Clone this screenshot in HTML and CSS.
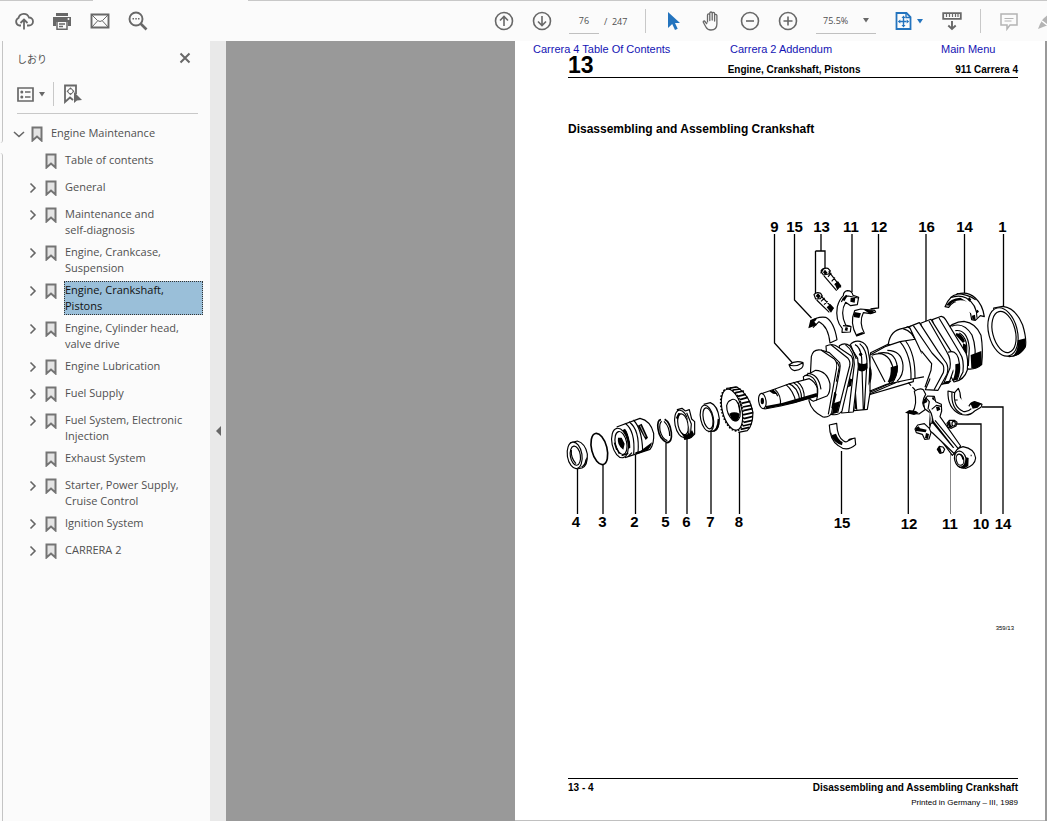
FILE: index.html
```
<!DOCTYPE html>
<html lang="en">
<head>
    <meta charset="UTF-8">
    <meta name="viewport" content="width=device-width, initial-scale=1.0">
    <title>Engine, Crankshaft, Pistons</title>
    <link rel="stylesheet" href="styles.css">
</head>
<body>
    <!-- shared icons -->
    <svg class="defs" width="0" height="0" aria-hidden="true">
        <symbol id="bookmark" viewBox="0 0 12 16"><path d="M1.5 1.5h9v13L6 10.5l-4.500 4z" fill="#e4e4e4" stroke="#747474" stroke-width="2"/></symbol>
        <symbol id="right" viewBox="0 0 12 12"><path d="M3.500 1.500L8 6l-4.500 4.500" fill="none" stroke="#666" stroke-width="1.600"/></symbol>
        <symbol id="down" viewBox="0 0 12 12"><path d="M1 4l5 4.500L11 4" fill="none" stroke="#666" stroke-width="1.600"/></symbol>
        <symbol id="caret" viewBox="0 0 6 5"><path d="M0 0h6L3 4.500z" fill="currentColor"/></symbol>
    </svg>

    <div class="tab-edge"><span></span><i></i><b></b></div>
    <header class="toolbar">
        <div class="tools">
            <button aria-label="Upload"><svg width="20" height="20" viewBox="0 0 20 20"><path d="M7 14.500H5a4 4 0 0 1-.5-7.500 5.500 5.500 0 0 1 10.500-.5 4 4 0 0 1 0 8h-2M10 18.500V9M6.500 12L10 8.500l3.500 3.500" fill="none" stroke="currentColor" stroke-width="1.800"/></svg></button>
            <button aria-label="Print"><svg width="20" height="20" viewBox="0 0 20 20"><path d="M4 2h12v3H4zM1 6h18v9h-3v-4H4v4H1z" fill="currentColor"/><path d="M5 11v7.200h10V11M7 13h6M7 15.500h4" fill="none" stroke="currentColor" stroke-width="1.500"/><circle cx="16.500" cy="8" r="1" fill="#fff"/></svg></button>
            <button aria-label="Mail"><svg width="20" height="20" viewBox="0 0 20 20"><path d="M1.500 3.500h17v13h-17z" fill="none" stroke="currentColor" stroke-width="1.900"/><path d="M2 4l5.500 5.500q2.500 2 5 0L18 4M2 16l5.500-6M18 16l-5.500-6" fill="none" stroke="currentColor"/></svg></button>
            <button aria-label="Search"><svg width="20" height="20" viewBox="0 0 20 20"><circle cx="8" cy="8" r="6.500" fill="none" stroke="currentColor" stroke-width="1.900"/><path d="M12.500 12.500l6 6" stroke="currentColor" stroke-width="2.600"/><path d="M4.500 7h1.500v1.500H4.500zM7.300 7h1.500v1.500H7.300zM10 7h1.500v1.500H10z" fill="currentColor"/></svg></button>
        </div>
        <div class="tools main-tools">
            <button aria-label="Previous page"><svg width="20" height="20" viewBox="0 0 20 20" fill="none" stroke="currentColor" stroke-width="1.600"><circle cx="10" cy="10" r="8.500"/><path d="M10 15V5.500M6 9.500l4-4 4 4"/></svg></button>
            <button aria-label="Next page"><svg width="20" height="20" viewBox="0 0 20 20" fill="none" stroke="currentColor" stroke-width="1.600"><circle cx="10" cy="10" r="8.500"/><path d="M10 5v9.500M6 10.500l4 4 4-4"/></svg></button>
            <input class="page-no" type="text" value="76" aria-label="Page number">
            <span class="page-total">/&nbsp; 247</span>
            <span class="sep"></span>
            <button class="blue" aria-label="Select"><svg width="20" height="20" viewBox="0 0 20 20"><path d="M4 1v16l4.200-4 2.800 6 2.700-1.200L11 12h5z" fill="currentColor"/></svg></button>
            <button aria-label="Hand"><svg width="20" height="20" viewBox="0 0 20 20" fill="none" stroke="currentColor" stroke-width="1.300" stroke-linejoin="round"><path d="M5.500 11.500V4q0-1.200 1.100-1.200T7.800 4v5.500V2.300q0-1.300 1.200-1.300t1.200 1.300V9V2.600q0-1.200 1.200-1.200t1.200 1.200V10V4.500q0-1.200 1.100-1.200t1.200 1.200V13q0 6-6 6-3.500 0-5-3L1.300 11.300q-.3-1.500 1.200-1.300l2.500 3"/></svg></button>
            <button aria-label="Zoom out"><svg width="20" height="20" viewBox="0 0 20 20" fill="none" stroke="currentColor" stroke-width="1.600"><circle cx="10" cy="10" r="8.500"/><path d="M6 10h8"/></svg></button>
            <button aria-label="Zoom in"><svg width="20" height="20" viewBox="0 0 20 20" fill="none" stroke="currentColor" stroke-width="1.600"><circle cx="10" cy="10" r="8.500"/><path d="M5.500 10h9M10 5.500v9"/></svg></button>
            <label class="zoom"><select aria-label="Zoom level"><option>75.5%</option></select><svg width="6" height="5"><use href="#caret"/></svg></label>
            <button class="blue fit" aria-label="Fit page"><svg width="18" height="20" viewBox="0 0 18 20"><path d="M1.500 2h10l4 4v12h-14z" fill="none" stroke="currentColor" stroke-width="1.800"/><path d="M11 2v4.500h5" fill="none" stroke="currentColor" stroke-width="1.400"/><path d="M8.500 4.500l2 2.500h-4zM8.500 16.500l2-2.500h-4zM2.800 10.500l2.500-2v4zM14.200 10.500l-2.500-2v4zM7.800 7h1.400v7H7.800zM5 9.800h7v1.400H5z" fill="currentColor"/></svg><svg width="6" height="5"><use href="#caret"/></svg></button>
            <button aria-label="Reading mode"><svg width="20" height="20" viewBox="0 0 20 20"><path d="M1.200 2.200h17.600v5.600H1.200z" fill="none" stroke="currentColor" stroke-width="1.800"/><path d="M4.500 3v3M7.500 3v3M10.500 3v3M13.500 3v3M16 3v3" stroke="currentColor" stroke-width="1.200"/><path d="M10 10v8M6.300 14.500L10 18l3.700-3.500" fill="none" stroke="currentColor" stroke-width="1.900"/></svg></button>
            <span class="sep"></span>
            <button class="pale" aria-label="Comment"><svg width="20" height="20" viewBox="0 0 20 20"><path d="M2 3h16v11h-7l-3 4v-4H2z" fill="none" stroke="currentColor" stroke-width="1.500"/><path d="M5.500 7.500h9M5.500 10h7" stroke="currentColor"/></svg></button>
            <button class="pale pen" aria-label="Highlight"><svg width="20" height="20" viewBox="0 0 20 20"><path d="M1 18l2-5 3-5 8-7 5 5-8 8-5 2z" fill="currentColor"/><path d="M5 10l5 4" stroke="#fff" stroke-width="1.500"/></svg></button>
        </div>
    </header>

    <main class="workspace">
        <div class="rail"><span></span><i></i></div>
        <aside class="sidebar">
            <div class="panel-head">
                <h2 lang="ja">しおり</h2>
                <button aria-label="Close"><svg width="12" height="12" viewBox="0 0 12 12"><path d="M1.500 1.500l9 9M10.500 1.500l-9 9" stroke="currentColor" stroke-width="2"/></svg></button>
            </div>
            <div class="panel-tools">
                <button aria-label="Options"><svg width="17" height="15" viewBox="0 0 17 15"><path d="M1 1h15v13H1z" fill="none" stroke="currentColor" stroke-width="1.700"/><circle cx="4.800" cy="5" r="1.500" fill="currentColor"/><circle cx="4.800" cy="10" r="1.500" fill="currentColor"/><path d="M8 5h5.500M8 10h5.500" stroke="currentColor" stroke-width="1.500"/></svg><svg width="6" height="5"><use href="#caret"/></svg></button>
                <span class="sep"></span>
                <button aria-label="Find bookmark"><svg width="19" height="20" viewBox="0 0 19 20"><path d="M13 10V1.500H2V18l5-4.500 3 2.500" fill="none" stroke="currentColor" stroke-width="1.800"/><path d="M7.500 3.200l4 4-4 4-4-4z" fill="currentColor"/><circle cx="7.500" cy="7.200" r="2" fill="#fff"/><path d="M11 8v11l3-2.500 5-.5z" fill="currentColor"/></svg></button>
            </div>
            <ul class="tree">
                <li class="row root"><button aria-label="Collapse"><svg width="12" height="12"><use href="#down"/></svg></button><svg width="12" height="16"><use href="#bookmark"/></svg><a href="#">Engine Maintenance</a></li>
                <li class="row"><span class="blank"></span><svg width="12" height="16"><use href="#bookmark"/></svg><a href="#">Table of contents</a></li>
                <li class="row"><button aria-label="Expand"><svg width="12" height="12"><use href="#right"/></svg></button><svg width="12" height="16"><use href="#bookmark"/></svg><a href="#">General</a></li>
                <li class="row"><button aria-label="Expand"><svg width="12" height="12"><use href="#right"/></svg></button><svg width="12" height="16"><use href="#bookmark"/></svg><a href="#">Maintenance and<br>self-diagnosis</a></li>
                <li class="row"><button aria-label="Expand"><svg width="12" height="12"><use href="#right"/></svg></button><svg width="12" height="16"><use href="#bookmark"/></svg><a href="#">Engine, Crankcase,<br>Suspension</a></li>
                <li class="row"><button aria-label="Expand"><svg width="12" height="12"><use href="#right"/></svg></button><svg width="12" height="16"><use href="#bookmark"/></svg><a class="selected" href="#">Engine, Crankshaft,<br>Pistons</a></li>
                <li class="row"><button aria-label="Expand"><svg width="12" height="12"><use href="#right"/></svg></button><svg width="12" height="16"><use href="#bookmark"/></svg><a href="#">Engine, Cylinder head,<br>valve drive</a></li>
                <li class="row"><button aria-label="Expand"><svg width="12" height="12"><use href="#right"/></svg></button><svg width="12" height="16"><use href="#bookmark"/></svg><a href="#">Engine Lubrication</a></li>
                <li class="row"><button aria-label="Expand"><svg width="12" height="12"><use href="#right"/></svg></button><svg width="12" height="16"><use href="#bookmark"/></svg><a href="#">Fuel Supply</a></li>
                <li class="row"><button aria-label="Expand"><svg width="12" height="12"><use href="#right"/></svg></button><svg width="12" height="16"><use href="#bookmark"/></svg><a href="#">Fuel System, Electronic<br>Injection</a></li>
                <li class="row"><span class="blank"></span><svg width="12" height="16"><use href="#bookmark"/></svg><a href="#">Exhaust System</a></li>
                <li class="row"><button aria-label="Expand"><svg width="12" height="12"><use href="#right"/></svg></button><svg width="12" height="16"><use href="#bookmark"/></svg><a href="#">Starter, Power Supply,<br>Cruise Control</a></li>
                <li class="row"><button aria-label="Expand"><svg width="12" height="12"><use href="#right"/></svg></button><svg width="12" height="16"><use href="#bookmark"/></svg><a href="#">Ignition System</a></li>
                <li class="row"><button aria-label="Expand"><svg width="12" height="12"><use href="#right"/></svg></button><svg width="12" height="16"><use href="#bookmark"/></svg><a href="#">CARRERA 2</a></li>
            </ul>
        </aside>
        <button class="splitter" aria-label="Hide panel"><svg width="5" height="10" viewBox="0 0 5 10"><path d="M5 0v10L0 5z" fill="currentColor"/></svg></button>

        <section class="viewer">
            <article class="page">
                <nav class="links">
                    <a href="#">Carrera 4 Table Of Contents</a>
                    <a href="#">Carrera 2 Addendum</a>
                    <a href="#">Main Menu</a>
                </nav>
                <div class="chapter">
                    <strong>13</strong>
                    <span>Engine, Crankshaft, Pistons</span>
                    <span class="model">911 Carrera 4</span>
                </div>
                <h1>Disassembling and Assembling Crankshaft</h1>

                <svg class="figure" viewBox="515 200 530 345" role="img" aria-label="Exploded view of the crankshaft">
                    <!-- leader lines -->
                    <g class="leaders">
                        <path d="M577.500 468v46M603 465v49M635.500 455v59M666 443v71M687 439v75M711 431v83M739.500 431v83M841.500 451v63"/>
                        <path d="M774.500 234v109l19 21M794.500 234v66l17 18M821 234v17M815.500 251v42M815.500 251h9.500v17M852 234v58M878.500 234v74l-8 1"/>
                        <path d="M926 234v96M964.500 234v60M1003.500 234v74"/>
                        <path d="M908.300 412v102M957 424h24v90M982 407h21v107"/>
                        <path class="thin" d="M950.500 454v60"/>
                    </g>

                    <!-- parts 4, 3, 2, 5, 6, 7, 8 -->
                    <g class="part" transform="translate(560 370) scale(.3333)">
                        <path d="M30 219L52 213Q76 220 82 252Q84 286 66 294L50 297"/>
                        <ellipse cx="44" cy="256" rx="22" ry="40" transform="rotate(-9 44 256)"/>
                        <ellipse cx="46" cy="257" rx="15" ry="29" transform="rotate(-9 46 257)"/>
                        <path d="M34 240q-2 24 14 41"/>
                        <path class="ink" d="M54 295q20-7 22-26l5-8q3 30-27 34z"/>
                        <ellipse class="heavy" cx="118" cy="237" rx="23" ry="48" transform="rotate(-14 118 237)"/>
                        <path d="M170 171L240 145Q272 152 281 190Q283 222 270 238L195 263"/>
                        <ellipse cx="180" cy="219" rx="24" ry="45" transform="rotate(-12 180 219)"/>
                        <ellipse cx="183" cy="219" rx="17" ry="35" transform="rotate(-12 183 219)"/>
                        <path class="ink" d="M174 203q-4 22 16 36l4-18-9-18zM187 181q18 20 18 56l6-4q0-38-16-57z"/>
                        <path d="M195 160q32 22 26 94M207 155q33 24 27 94M220 150q26 26 28 92" />
                        <path class="ink" d="M233 167l12-6 19 42-7 7zM226 247l16-5 34-25q-3 16-13 23l-36 14z"/>
                        <path stroke="#fff" stroke-width="2" d="M241 167l15 33"/>
                        <path d="M170 240l-7-22M178 252l-12-26M205 250l-20 7M216 248l-10 10"/>
                        <path class="heavy" d="M303 149Q291 150 294 176Q298 207 321 218Q337 217 334 187Q330 157 314 148"/>
                        <path d="M305 154Q297 160 300 181Q306 206 322 212M329 198q0-28-17-44"/>
                        <path d="M352 119l14-4 10 8 12-4 7 28 9 8v37l-10 10-20 6z"/>
                        <ellipse cx="366" cy="162" rx="21" ry="42" transform="rotate(-12 366 162)"/>
                        <ellipse cx="369" cy="163" rx="15" ry="32" transform="rotate(-12 369 163)"/>
                        <path class="ink" d="M362 186q20 18 34-6l6 12q-12 22-28 14zM348 143l7-14 6 1-8 20z"/>
                        <path d="M380 128l14 34-3 36"/>
                        <path d="M431 103l20-5q22 8 27 48q0 31-14 37l-20 2"/>
                        <ellipse cx="441" cy="145" rx="19" ry="40" transform="rotate(-12 441 145)"/>
                        <ellipse cx="444" cy="145" rx="14" ry="32" transform="rotate(-12 444 145)"/>
                        <path class="ink" d="M453 184q19-3 20-38l5 2q1 38-20 37z"/>
                        <path d="M502 55L531 51Q569 75 579 127Q578 169 562 182L535 187"/>
                        <path stroke-width="5" d="M518 60l24-3M527 68l25-5M533 79l25-6M540 89l24-7M544 100l27-6M548 111l26-5M550 122l28-6M552 134l27-6M552 146l27-7M551 157l26-6M548 168l26-6M542 178l26-6M510 54l20-3"/>
                        <ellipse cx="516" cy="119" rx="29" ry="63" transform="rotate(-14 516 119)"/>
                        <ellipse cx="516" cy="119" rx="31" ry="65" transform="rotate(-14 516 119)" stroke-dasharray="5 5" stroke-width="5" fill="none"/>
                        <path d="M512 91q8-7 17 1 14 18 11 48-7 19-22 10-18-18-18-43 4-15 12-16z"/>
                        <path class="ink" d="M508 131q14-8 31 0-2 26-17 22-10-7-14-22z"/>
                        <path d="M535 98l5 30"/>
                    </g>

                    <!-- front half of the crankshaft with bolts and bearing shells -->
                    <g class="part" transform="translate(750 210) scale(.3333)">
                        <path d="M117 464q20-14 42-6 4 21-25 24-12-2-17-18zM117 465q20 7 42-7"/>
                        <path d="M182 335q18-16 45-13 25 13 34 67l-21 10q-5-50-33-64l-18 18"/>
                        <path class="ink" d="M175 355l6-25 20-7q-2 10-8 12l8 10z"/>
                        <path d="M213 183q6-11 21-8l7 8-5 9-16 3zM212 190l9-14M236 184l37 48M222 198l38 44M234 201l10-12M245 214l10-11M254 225l11-9"/>
                        <path class="ink" d="M219 187l6-8 8 10-8 5zM254 221l10-7 10 13-12 14z"/>
                        <path d="M192 254q7-10 20-4l5 8-6 8-14 1zM213 258l37 38M200 270l38 37M213 274l11-10M222 284l11-10"/>
                        <path class="ink" d="M197 258l7-8 8 8-6 8zM230 292l11-10 11 12-9 14z"/>
                        <path d="M262 290q6-22 18-33 0-12 12-15 14 0 17 14l17 6-4 22-20 3-15-10q-18 30 0 68l16 5-2 16-25 1 1-11q-22-25-15-66z"/>
                        <path d="M274 276q8-18 21-18l29 6M279 347l22 2"/>
                        <path class="ink" d="M302 263l14 1-2 14-13-3zM276 268l12-14 5 3-10 17zM287 351l7 2-2 10-8-2z"/>
                        <path d="M314 302l18-5 42 4 3 5-15 5-22-3q-14 28 3 62l-23 8q-22-40-6-76z"/>
                        <path class="ink" d="M313 306l20 4-5 14-17-3zM341 299l25 2 10 7-17 3zM319 373l18-7 5 4-22 9z"/>

                        <path d="M362 428L420 400Q450 390 490 390V515L440 530L355 555z"/>
                        <path d="M390 424q34 8 30 94M404 420q32 18 28 101M430 405q26 45 16 112M363 443l40 67M358 537l60-29M357 553l83-36"/>
                        <path class="ink" d="M411 431q20 38 9 83l13 3q11-51-13-90zM359 480q21 14 0 53z"/>
                        <path d="M300 405Q311 391 330 394Q349 399 354 420L368 500L352 598L312 602L296 430z"/>
                        <path d="M315 404q16 7 20 39l5 157M329 401q20 17 22 51l-8 145"/>
                        <path class="ink" d="M322 455q14 12 30 3l1 17q-14 15-29 6zM358 470l9 25-12 32z"/>
                        <circle cx="332" cy="433" r="5" class="ink"/>
                        <path d="M268 407Q284 396 300 408L323 445L325 470L310 606L275 609z"/>
                        <path d="M286 404q27 20 27 59l-17 144M302 405l17 42"/>
                        <path class="ink" d="M298 505l9 3-4 20-9 4zM314 595l3-60 5 66z"/>
                        <path d="M228 408Q249 398 264 411L303 437Q312 449 307 469L276 603Q265 618 243 613z"/>
                        <path d="M244 405L294 445Q302 454 299 468L263 609"/>
                        <path class="ink" d="M251 580l20-7-9 35-16 5z"/>
                        <path d="M181 497L184 440Q189 416 213 420L238 428L269 458Q272 466 269 482L245 608Q240 623 219 621Q185 605 177 573z"/>
                        <path d="M213 420L252 446Q264 459 260 474L235 613"/>
                        <path d="M262 457l6 14-9 44"/>
                        <path class="ink" d="M253 545l-9 49 5 2 11-44z"/>
                        <path d="M160 500L197 481Q232 483 240 522Q241 549 231 558L190 574Q166 565 160 500z"/>
                        <path d="M163 497q32-6 40 39 1 23-4 36M172 490q34 1 41 48"/>
                        <path d="M38 550L75 537L116 522L178 506Q196 515 202 535L202 558L133 578L92 588L44 597z"/>
                        <ellipse cx="37" cy="573" rx="11" ry="23" transform="rotate(-8 37 573)"/>
                        <ellipse cx="37" cy="573" rx="5" ry="10" class="ink"/>
                        <path d="M75 538q20 18 16 49M66 541q12 4 17 18M116 521q28 9 34 52M129 517q27 15 26 54M140 514q24 16 23 54M108 524q22 18 30 53"/>
                        <path class="ink" d="M48 588l48-9 60-17 44-13 2 10-70 20-84 17zM58 544l13-5 12 14-14-2z"/>

                        <path d="M238 645l22-5q2 43 21 53 9 7 17-5l17-4 2 20q-27 24-52 3-26-17-27-62z"/>
                        <path class="ink" d="M240 657l6 18 12-4q8 20 20 25l-2 10q-22-7-31-25zM296 688l18-4-16 9z"/>
                    </g>

                    <!-- rear half, shell 14 and seal ring 1 -->
                    <g class="part" transform="translate(870 210) scale(.3333)">
                        <path d="M225 365Q246 335 282 334Q318 339 333 376Q340 418 335 464Q315 482 286 476L250 430z"/>
                        <path d="M245 349q36-15 61 26 15 38 7 101M256 362q36-5 42 52l-3 54M268 369q30 18 20 70"/>
                        <path class="ink" d="M302 435l32-12 2 40q-13 15-32 12zM258 370q17-2 27 24l-6 5-22-24zM279 400l11 5-3 36-9-12z"/>
                        <path d="M55 402Q61 361 98 355L122 349Q156 365 155 400L120 440z"/>
                        <path d="M97 355q34 9 42 45M110 350q38 11 44 54"/>
                        <path class="ink" d="M122 362q22 6 33 34l-5 14-20-28z"/>
                        <path d="M0 435L45 410L90 395L140 387Q168 416 165 500L110 510L50 523L0 543z"/>
                        <path d="M5 436q34-15 54 13 22 36-2 71M24 430q52-12 58 42 0 28-16 48M52 421q43 0 47 45 2 30-18 48M90 395q35 42 33 113M107 393q29 39 28 111M5 439l40 77M0 547l70-31"/>
                        <path class="ink" d="M62 472l22-6q0 34-17 49l-14 1q11-20 9-44zM0 466q11 26 0 55z"/>
                        <path d="M187 329L214 319Q222 320 227 329L288 430Q295 444 292 480Q283 510 252 516L215 450z"/>
                        <path d="M207 324L270 430Q283 448 279 486L267 509"/>
                        <path d="M152 340L183 328L243 424Q257 441 253 473L239 513L208 526z"/>
                        <path d="M177 333L231 427Q244 447 240 474L221 521M234 427q22-9 31 17 10 37-5 69"/>
                        <path class="ink" d="M256 463l14-3q3 26-10 50l-13 3q11-22 9-50z"/>
                        <path d="M118 350L148 338L204 424L229 459Q237 472 231 493L204 541L166 539L192 479L187 459L155 429z"/>
                        <path d="M130 347L186 429L217 462Q224 470 220 488L192 540M154 423l31 38-2 20-18 51"/>
                        <path class="ink" d="M213 524l15-10 17-2-9 9z"/>
                        <path d="M225 290Q239 256 261 253Q292 242 316 264Q338 284 343 320L331 317L316 331L305 329Q302 287 273 272Q249 272 236 292z"/>
                        <path d="M241 263q27-10 48 1 32 19 32 59M260 251q32 1 57 18"/>
                        <path class="ink" d="M228 286q13-21 43-23l20 12q-10-4-20-4-22 1-33 16zM293 268l5-7 6 8-6 6zM317 304l6-5 4 6-6 5zM306 317l9-3 2 17-10-3z"/>
                        <path d="M371 294L398 289Q437 293 458 345Q471 388 466 411Q450 438 418 440L380 420z"/>
                        <ellipse cx="399" cy="366" rx="43" ry="74" transform="rotate(-14 399 366)"/>
                        <ellipse cx="402" cy="366" rx="34" ry="63" transform="rotate(-14 402 366)"/>
                        <path class="ink" d="M443 391l24-6-1 26q-15 27-40 29 19-14 17-49z"/>
                    </g>

                    <!-- connecting rod, nuts and lower shells -->
                    <g class="part" transform="translate(860 370) scale(.3333)">
                        <path stroke-dasharray="12 6" d="M145 38l26 28"/>
                        <path d="M163 64q16-12 27-5l7 14q-17 27 0 45l-20 14-21-2q18-28 7-66z"/>
                        <path class="ink" d="M135 128l13-8 20 3 8 6-14 6z"/>
                        <path d="M190 96l12-18 21 1 4 16 17 8 1 20-5 17 62 88-25 28-68-91 2-36-17-13z"/>
                        <path d="M207 118q14 20 9 44M225 151l74 90M213 158l-6 23 11 8 69 66M197 83l11 12-4 23M215 118l14-12 15 3"/>
                        <path class="ink" d="M190 90l8-8 4 14-10 5zM219 77l7 17-10-7zM228 111l10-1 3 9-10 5zM218 138l3 15 62 80-4 1-64-77z"/>
                        <path d="M165 177l8-12 20-4 15 14 5 13-6 19-13 1-7-15-18-5z"/>
                        <path class="ink" d="M165 175l11-6 4 6 20 4-3 8-29-4zM198 189l9 3-3 15-9-3z"/>
                        <path d="M284 257Q284 236 309 230Q344 236 347 264Q345 286 317 295Q293 294 284 257z"/>
                        <ellipse cx="301" cy="268" rx="17" ry="25" transform="rotate(-14 301 268)"/>
                        <ellipse cx="300" cy="269" rx="11" ry="17" transform="rotate(-14 300 269)"/>
                        <path class="ink" d="M290 281q10 17 22 2l7-21 7 2-1 24-14 8q-16 0-21-15zM294 253q13-5 19 14l-6 2q-3-15-13-16zM332 254h3v5h-3z"/>
                        <path d="M261 160l7-9h15l8 6-3 11-14 7-10-3z"/>
                        <path class="ink" d="M262 159l8-7 2 12 7 8-11 2z"/>
                        <ellipse cx="281" cy="161" rx="5" ry="7"/>
                        <path d="M232 238l6-9 11 2 5 7-4 9-10 3z"/>
                        <path class="ink" d="M232 238l7-9 3 7 3 12-8 1z"/>
                        <path d="M264 63l20 5 11-13 5 13q2 40 26 42 5-12 18-15l22 8-3 9-19 11q-17 18-45 9-37-18-35-69z"/>
                        <path d="M284 68q-5 43 25 56 15 3 25-8M276 66q-4 51 31 67M286 90h7"/>
                        <path class="ink" d="M331 100l10-5 24 5-12 13-15 3z"/>
                    </g>

                    <g class="numbers">
                        <text x="774.500" y="232">9</text><text x="794.500" y="232">15</text><text x="821.500" y="232">13</text><text x="851" y="232">11</text><text x="879" y="232">12</text><text x="926.500" y="232">16</text><text x="964.500" y="232">14</text><text x="1002.500" y="232">1</text>
                        <text x="576" y="527">4</text><text x="602.500" y="527">3</text><text x="634.500" y="527">2</text><text x="665.500" y="527">5</text><text x="686.500" y="527">6</text><text x="710.500" y="527">7</text><text x="739" y="527">8</text><text x="842" y="528">15</text><text x="909" y="529">12</text><text x="950" y="529">11</text><text x="981" y="529">10</text><text x="1003" y="529">14</text>
                    </g>
                </svg>

                <p class="figure-no">359/13</p>
                <footer class="page-foot">
                    <div><span>13 - 4</span><span>Disassembling and Assembling Crankshaft</span></div>
                    <small>Printed in Germany – III, 1989</small>
                </footer>
            </article>
        </section>
    </main>
</body>
</html>
```
FILE: styles.css
```
* {
    box-sizing: border-box;
}

body {
    display: flex;
    flex-direction: column;
    height: 100vh;
    margin: 0;
    overflow: hidden;
    background-color: #fbfbfb;
    color: #505050;
    font-family: "Open Sans", "Noto Sans CJK JP", sans-serif;
    font-size: 11px;
}

.defs {
    position: absolute;
}

button {
    display: flex;
    align-items: center;
    justify-content: center;
    flex-shrink: 0;
    padding: 0;
    border: 0;
    background: none;
    color: #686868;
    cursor: pointer;
}

a {
    color: inherit;
    text-decoration: none;
}

/* top edge, left open under the active tab */
.tab-edge {
    display: flex;
    height: 1px;
}

.tab-edge span {
    width: 93px;
    background-color: #c8c8c8;
}

.tab-edge i {
    width: 155px;
}

.tab-edge b {
    flex: 1;
    background-color: #c8c8c8;
}

.toolbar {
    display: flex;
    justify-content: space-between;
    height: 40px;
    flex-shrink: 0;
    padding-left: 5px;
}

.tools {
    display: flex;
    align-items: center;
}

.tools button {
    width: 38px;
    height: 40px;
}

.tools .blue {
    color: #2474be;
}

.tools .pale {
    color: #b4b4b4;
}

.tools .pen {
    width: 19px;
    justify-content: flex-start;
    padding-left: 9px;
    overflow: hidden;
}

.tools .pen svg {
    flex-shrink: 0;
}

.tools .fit {
    gap: 4px;
    margin: 0 5px 0 14px;
}

.sep {
    width: 1px;
    height: 24px;
    background-color: #c8c8c8;
}

.main-tools .sep {
    margin: 0 9px;
}

.page-no {
    width: 30px;
    height: 25px;
    margin: 0 5px 0 8px;
    padding: 0;
    border: 0;
    border-bottom: 1px solid #c0c0c0;
    background: none;
    color: #505050;
    font: 9px "Open Sans", sans-serif;
    text-align: center;
}

.page-total {
    width: 32px;
    font-size: 9px;
    white-space: nowrap;
}

.zoom {
    display: flex;
    align-items: center;
    width: 60px;
    height: 25px;
    margin-left: 9px;
    padding: 0 7px;
    border-bottom: 1px solid #c0c0c0;
    color: #686868;
}

.zoom select {
    flex: 1;
    min-width: 0;
    padding: 0;
    border: 0;
    appearance: none;
    background: none;
    color: #505050;
    font: 9px "Open Sans", sans-serif;
}

.workspace {
    display: flex;
    flex: 1;
    min-height: 0;
}

.rail {
    display: flex;
    flex-direction: column;
    gap: 10px;
    width: 3px;
}

.rail span {
    height: 102px;
    border-right: 1px solid #c4c4c4;
    border-bottom-right-radius: 3px;
}

.rail i {
    flex: 1;
    border-right: 1px solid #c4c4c4;
    border-top-right-radius: 3px;
}

.sidebar {
    width: 207px;
}

.panel-head {
    display: flex;
    align-items: center;
    justify-content: space-between;
    height: 34px;
    padding: 0 19px 0 14px;
}

.panel-head h2 {
    margin: 0;
    font-family: "Noto Sans CJK JP", sans-serif;
    font-size: 10px;
    font-weight: normal;
}

.panel-tools {
    display: flex;
    align-items: center;
    height: 39px;
    margin: 0 12px 8px 14px;
    border-bottom: 1px solid #c8c8c8;
}

.panel-tools button {
    gap: 5px;
}

.panel-tools .sep {
    margin: 0 9px 0 8px;
}

.tree {
    margin: 0;
    padding: 0 7px 0 24px;
    list-style: none;
}

.row {
    display: flex;
    align-items: flex-start;
    min-height: 27px;
    padding: 2px 0;
}

.row.root {
    margin-left: -14px;
}

.row > svg {
    flex-shrink: 0;
    margin: 2px 7px 0 6px;
}

.row button,
.blank {
    width: 12px;
    height: 20px;
    flex-shrink: 0;
}

.row a {
    flex: 1;
    border: 1px solid transparent;
    line-height: 16px;
    white-space: nowrap;
}

.row .selected {
    border: 1px dotted #333;
    background-color: #9abfd9;
    color: #111;
}

.splitter {
    width: 16px;
    padding-left: 1px;
    background-color: #e9e9e9;
}

/* the page sits at the right of the grey canvas */
.viewer {
    display: grid;
    grid-template-columns: 289fr 530fr 2px;
    flex: 1;
    min-width: 0;
    background-color: #999;
}

.page {
    display: flex;
    flex-direction: column;
    grid-column: 2;
    min-width: 0;
    border-bottom: 1px solid #c0c0c0;
    background-color: #fff;
    color: #000;
    font-family: "Liberation Sans", Arial, sans-serif;
}

.links {
    display: grid;
    grid-template-columns: 197fr 211fr 104fr;
    padding-left: 18px;
    color: #1414b4;
    font-size: 11px;
    line-height: 16px;
}

.chapter {
    display: grid;
    grid-template-columns: 160fr 200fr 91fr;
    align-items: end;
    height: 21px;
    margin: 0 27px 0 53px;
    border-bottom: 1px solid #000;
    font-size: 10px;
    font-weight: bold;
    line-height: 14px;
}

.chapter strong {
    align-self: start;
    font-size: 23px;
    line-height: 16px;
}

.chapter .model {
    text-align: right;
}

.page h1 {
    margin: 43px 27px 0 53px;
    font-size: 12px;
    line-height: 16px;
}

.figure {
    display: block;
    width: 100%;
    margin-top: 63px;
}

.leaders {
    fill: none;
    stroke: #000;
    stroke-width: 1.3;
}

.leaders .thin {
    stroke: #888;
    stroke-width: 1;
}

.part {
    fill: #fff;
    stroke: #000;
    stroke-width: 3.5;
    stroke-linejoin: round;
}

.part .heavy {
    stroke-width: 5;
}

.part .ink {
    fill: #000;
    stroke: none;
}

.numbers {
    font-size: 15px;
    font-weight: bold;
    text-anchor: middle;
}

.figure-no {
    margin: 79px 31px 0;
    font-size: 6px;
    line-height: 8px;
    text-align: right;
}

.page-foot {
    margin: auto 27px 11px 53px;
    border-top: 1px solid #000;
    text-align: right;
}

.page-foot div {
    display: flex;
    justify-content: space-between;
    font-size: 10px;
    font-weight: bold;
    line-height: 18px;
}

.page-foot small {
    display: block;
    font-size: 8px;
    line-height: 12px;
}
```
